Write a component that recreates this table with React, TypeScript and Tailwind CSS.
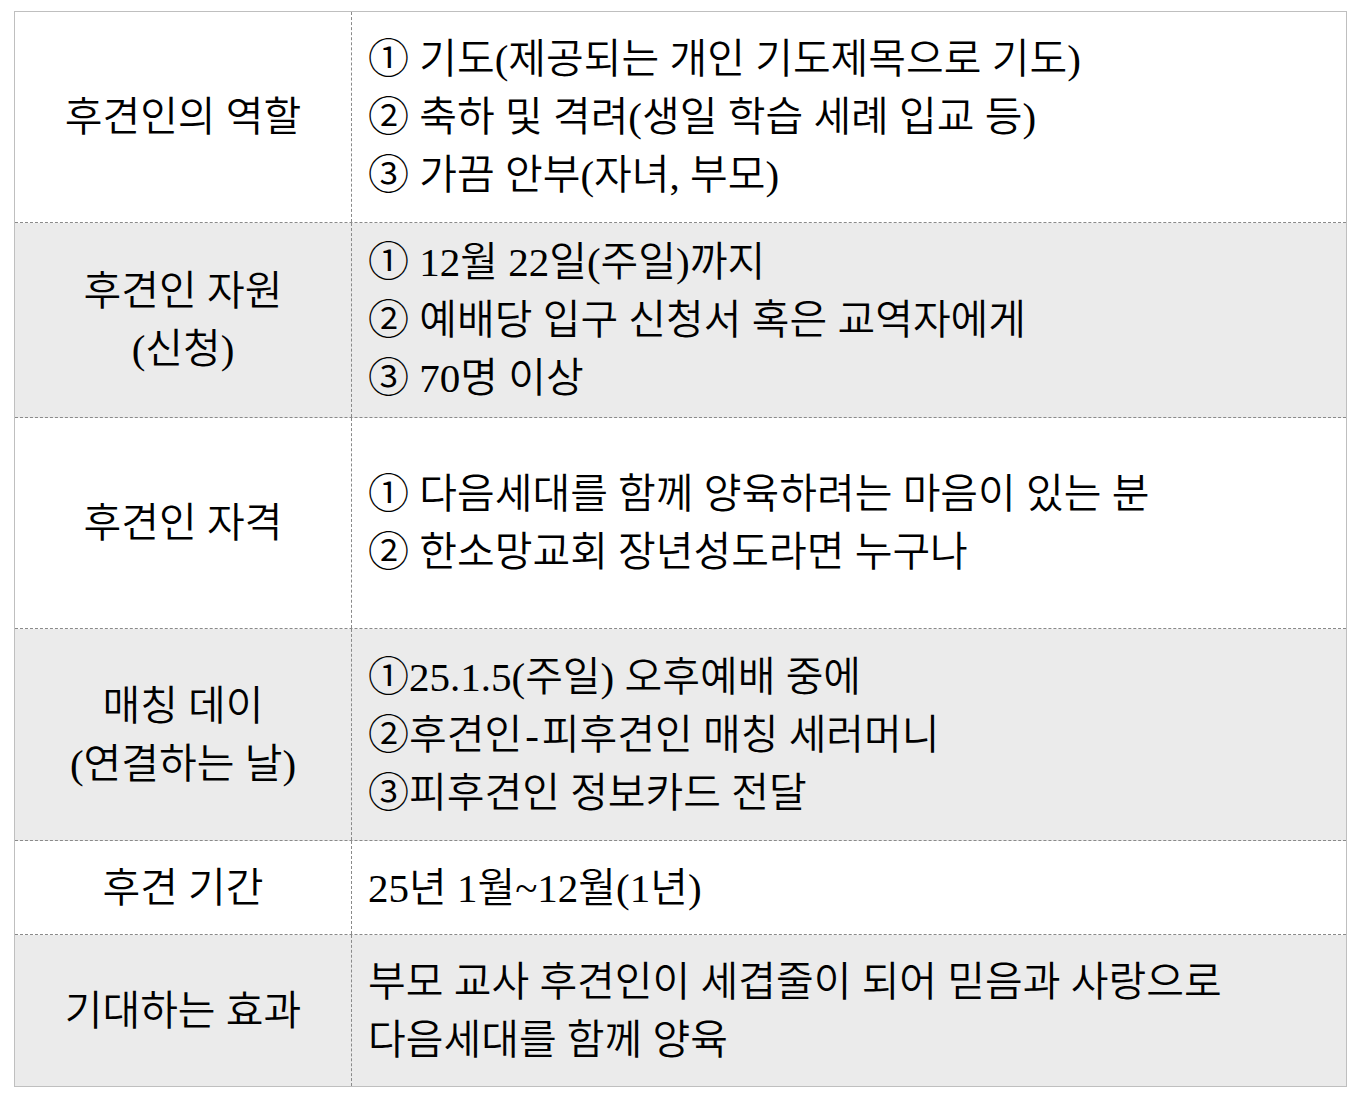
import React from "react";

type Row = { label: string[]; lines: React.ReactNode[]; h: string; gray: boolean; last?: boolean };

const rows: Row[] = [
  {
    label: ["후견인의 역할"],
    lines: ["① 기도(제공되는 개인 기도제목으로 기도)", "② 축하 및 격려(생일 학습 세례 입교 등)", "③ 가끔 안부(자녀, 부모)"],
    h: "h-[211px]",
    gray: false,
  },
  {
    label: ["후견인 자원", "(신청)"],
    lines: ["① 12월 22일(주일)까지", "② 예배당 입구 신청서 혹은 교역자에게", "③ 70명 이상"],
    h: "h-[195px]",
    gray: true,
  },
  {
    label: ["후견인 자격"],
    lines: ["① 다음세대를 함께 양육하려는 마음이 있는 분", "② 한소망교회 장년성도라면 누구나"],
    h: "h-[211px]",
    gray: false,
  },
  {
    label: ["매칭 데이", "(연결하는 날)"],
    lines: [
      "①25.1.5(주일) 오후예배 중에",
      <>
        ②후견인<span className="inline-block px-[3px]">-</span>피후견인 매칭 세러머니
      </>,
      "③피후견인 정보카드 전달",
    ],
    h: "h-[212px]",
    gray: true,
  },
  {
    label: ["후견 기간"],
    lines: ["25년 1월~12월(1년)"],
    h: "h-[94px]",
    gray: false,
  },
  {
    label: ["기대하는 효과"],
    lines: ["부모 교사 후견인이 세겹줄이 되어 믿음과 사랑으로", "다음세대를 함께 양육"],
    h: "h-[151px]",
    gray: true,
    last: true,
  },
];

export default function App() {
  return (
    <div className="w-[1368px] h-[1108px] bg-white pt-[11px] pl-[14px] font-['Liberation_Serif','Noto_Sans_CJK_KR',serif] text-[41px] font-[350] leading-[58px] text-black">
      <div className="w-[1333px] border border-[#bfbfbf]">
        {rows.map((r, i) => (
          <div
            key={i}
            className={`grid grid-cols-[337px_1fr] ${r.h} ${r.gray ? "bg-[#ebebeb]" : "bg-white"} ${
              r.last ? "" : "border-b border-dashed border-[#8a8a8a]"
            }`}
          >
            <div className="flex flex-col items-center justify-center border-r border-dashed border-[#8a8a8a] text-center">
              {r.label.map((l, j) => (
                <div key={j} className="whitespace-nowrap">
                  {l}
                </div>
              ))}
            </div>
            <div className="flex flex-col justify-center pl-[16px]">
              {r.lines.map((l, j) => (
                <div key={j} className="whitespace-nowrap">
                  {l}
                </div>
              ))}
            </div>
          </div>
        ))}
      </div>
    </div>
  );
}
